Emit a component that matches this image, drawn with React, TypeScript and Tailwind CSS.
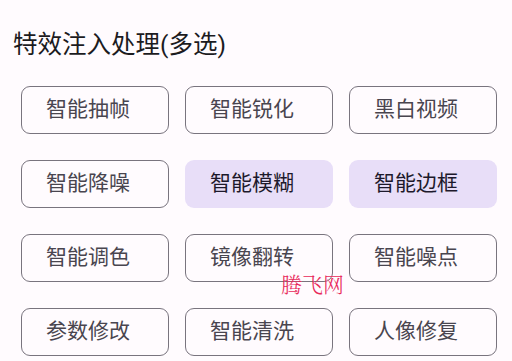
import { FC } from 'react';

interface Option {
    label: string;
    selected?: boolean;
}

const options: Option[] = [
    { label: '智能抽帧' },
    { label: '智能锐化' },
    { label: '黑白视频' },
    { label: '智能降噪' },
    { label: '智能模糊', selected: true },
    { label: '智能边框', selected: true },
    { label: '智能调色' },
    { label: '镜像翻转' },
    { label: '智能噪点' },
    { label: '参数修改' },
    { label: '智能清洗' },
    { label: '人像修复' },
];

const cjk = { fontFamily: 'Roboto, "Noto Sans CJK SC", sans-serif' };

const App: FC = () => {
    return (
        <div className="relative w-[512px] h-[361px] overflow-hidden bg-[#fffbfe]" style={cjk}>
            <div className="pt-[29px] pl-[13px] text-[24.5px] leading-[32px] text-[#1c1b1f]">
                特效注入处理(多选)
            </div>

            <div className="mt-[25px] ml-[21px] grid grid-cols-[148px_148px_148px] gap-x-[16px] gap-y-[26px]">
                {options.map((opt) => (
                    <button
                        key={opt.label}
                        className={
                            opt.selected
                                ? 'h-[48px] pr-[14px] rounded-[9px] bg-[#e8def8] text-[#1d192b] text-[21px] flex items-center justify-center'
                                : 'h-[48px] pr-[14px] rounded-[9px] border border-[#79747e] text-[#49454f] text-[21px] flex items-center justify-center'
                        }
                    >
                        {opt.label}
                    </button>
                ))}
            </div>

            {/* watermark */}
            <div
                className="absolute left-[281px] top-[269px] text-[21px] leading-[28px] font-light text-[#e8285a]"
                style={{ fontFamily: '"Noto Serif CJK SC", "Noto Sans CJK SC", serif' }}
            >
                腾飞网
            </div>
        </div>
    );
};

export default App;
